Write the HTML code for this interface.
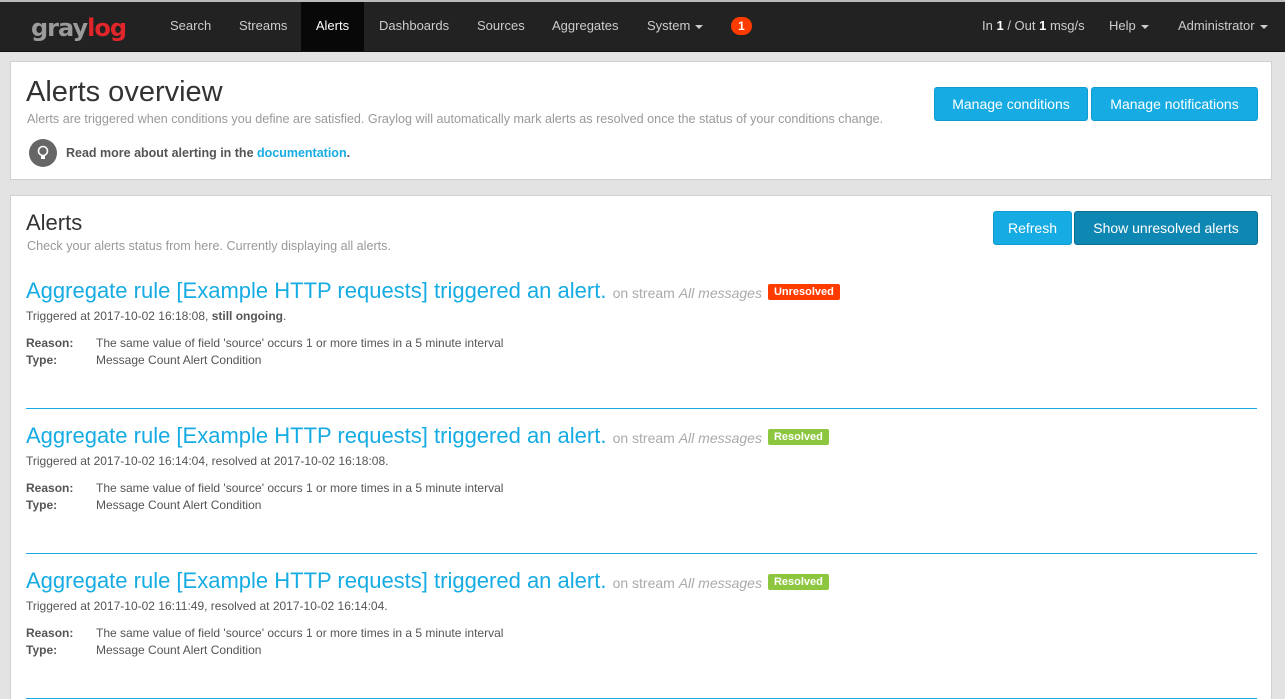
<!DOCTYPE html>
<html><head><meta charset="utf-8"><style>
*{box-sizing:border-box;margin:0;padding:0}
html,body{width:1285px;height:699px;overflow:hidden}
body{background:#e3e3e3;font-family:"Liberation Sans",sans-serif;color:#666;font-size:12px;position:relative}
.nav{position:absolute;left:0;top:0;width:1285px;height:52px;background:#222;border-top:2px solid #bbb;border-bottom:1px solid #111}
.nav a{position:absolute;top:0;height:49px;line-height:48px;color:#ccc;font-size:13px}
.logo{position:absolute;left:31px;top:12px;font-size:24px;font-weight:bold;letter-spacing:-1px;font-family:"DejaVu Sans","Liberation Sans",sans-serif}
.caret{display:inline-block;border-top:4px solid #ccc;border-left:4px solid transparent;border-right:4px solid transparent;vertical-align:middle;margin-left:5px}
.panel{position:absolute;left:10px;width:1262px;background:#fff;border:1px solid #d0d0d0}
.btn{position:absolute;height:34px;line-height:32px;background:#16ace3;color:#fff;border:1px solid #0e9bd0;border-radius:3px;font-size:14px;text-align:center}
h1{position:absolute;left:15px;font-weight:normal;color:#333}
.alert{position:absolute;left:15px;width:1231px}
.t{font-size:22px;color:#16ace3;white-space:nowrap}
.t .s{font-size:14px;color:#aaa}
.lbl{display:inline-block;color:#fff;font-weight:bold;font-size:11px;padding:2px 6px;border-radius:2px;vertical-align:3px;margin-left:6px}
.row{font-size:12px;color:#555;height:17px}
.row b{display:inline-block;width:70px}
hr{border:0;border-top:1px solid #16ace3;position:absolute;left:15px;width:1231px}
</style></head><body>
<div class="nav">
 <div class="logo"><span style="color:#9b9b9b">gray</span><span style="color:#e0262b">log</span></div>
 <a style="left:170px">Search</a><a style="left:239px">Streams</a>
 <a style="left:301px;width:63px;background:#080808;color:#fff;text-align:center">Alerts</a>
 <a style="left:379px">Dashboards</a><a style="left:477px">Sources</a><a style="left:552px">Aggregates</a>
 <a style="left:647px">System<span class="caret"></span></a>
 <span style="position:absolute;left:731px;top:15px;width:21px;height:18px;border-radius:9px;background:#ff3b00;color:#fff;font-weight:bold;font-size:12px;text-align:center;line-height:18px">1</span>
 <a style="left:982px">In <b style="color:#fff">1</b> / Out <b style="color:#fff">1</b> msg/s</a>
 <a style="left:1109px">Help<span class="caret"></span></a>
 <a style="left:1178px">Administrator<span class="caret"></span></a>
</div>
<div class="panel" style="top:61px;height:119px">
 <h1 style="top:14px;font-size:29px">Alerts overview</h1>
 <div style="position:absolute;left:16px;top:50px;font-size:12.6px;color:#999">Alerts are triggered when conditions you define are satisfied. Graylog will automatically mark alerts as resolved once the status of your conditions change.</div>
 <div style="position:absolute;left:18px;top:77px;width:28px;height:28px;border-radius:50%;background:#666">
  <svg width="28" height="28" viewBox="0 0 28 28"><circle cx="14" cy="12" r="4.5" fill="none" stroke="#fff" stroke-width="1.6"/><rect x="12" y="16" width="4" height="4" fill="#fff"/></svg>
 </div>
 <div style="position:absolute;left:55px;top:84px;font-weight:bold;color:#555;font-size:12.5px">Read more about alerting in the <span style="color:#16ace3">documentation</span>.</div>
 <div class="btn" style="left:923px;top:25px;width:154px">Manage conditions</div>
 <div class="btn" style="left:1080px;top:25px;width:167px">Manage notifications</div>
</div>
<div class="panel" style="top:195px;height:520px">
 <h1 style="top:14px;font-size:22px">Alerts</h1>
 <div style="position:absolute;left:16px;top:43px;font-size:12.6px;color:#999">Check your alerts status from here. Currently displaying all alerts.</div>
 <div class="btn" style="left:982px;top:15px;width:79px">Refresh</div>
 <div class="btn" style="left:1063px;top:15px;width:184px;background:#0f87b3;border-color:#0b6f96">Show unresolved alerts</div>

 <div class="alert" style="top:82px">
  <div class="t">Aggregate rule [Example HTTP requests] triggered an alert. <span class="s">on stream <i>All messages</i></span><span class="lbl" style="background:#ff3b00">Unresolved</span></div>
  <div class="row" style="margin-top:5px">Triggered at 2017-10-02 16:18:08, <b style="width:auto">still ongoing</b>.</div>
  <div class="row" style="margin-top:10px"><b>Reason:</b>The same value of field 'source' occurs 1 or more times in a 5 minute interval</div>
  <div class="row"><b>Type:</b>Message Count Alert Condition</div>
 </div>
 <hr style="top:212px">
 <div class="alert" style="top:227px">
  <div class="t">Aggregate rule [Example HTTP requests] triggered an alert. <span class="s">on stream <i>All messages</i></span><span class="lbl" style="background:#8dc63f">Resolved</span></div>
  <div class="row" style="margin-top:5px">Triggered at 2017-10-02 16:14:04, resolved at 2017-10-02 16:18:08.</div>
  <div class="row" style="margin-top:10px"><b>Reason:</b>The same value of field 'source' occurs 1 or more times in a 5 minute interval</div>
  <div class="row"><b>Type:</b>Message Count Alert Condition</div>
 </div>
 <hr style="top:357px">
 <div class="alert" style="top:372px">
  <div class="t">Aggregate rule [Example HTTP requests] triggered an alert. <span class="s">on stream <i>All messages</i></span><span class="lbl" style="background:#8dc63f">Resolved</span></div>
  <div class="row" style="margin-top:5px">Triggered at 2017-10-02 16:11:49, resolved at 2017-10-02 16:14:04.</div>
  <div class="row" style="margin-top:10px"><b>Reason:</b>The same value of field 'source' occurs 1 or more times in a 5 minute interval</div>
  <div class="row"><b>Type:</b>Message Count Alert Condition</div>
 </div>
 <hr style="top:502px">
</div>
</body></html>
